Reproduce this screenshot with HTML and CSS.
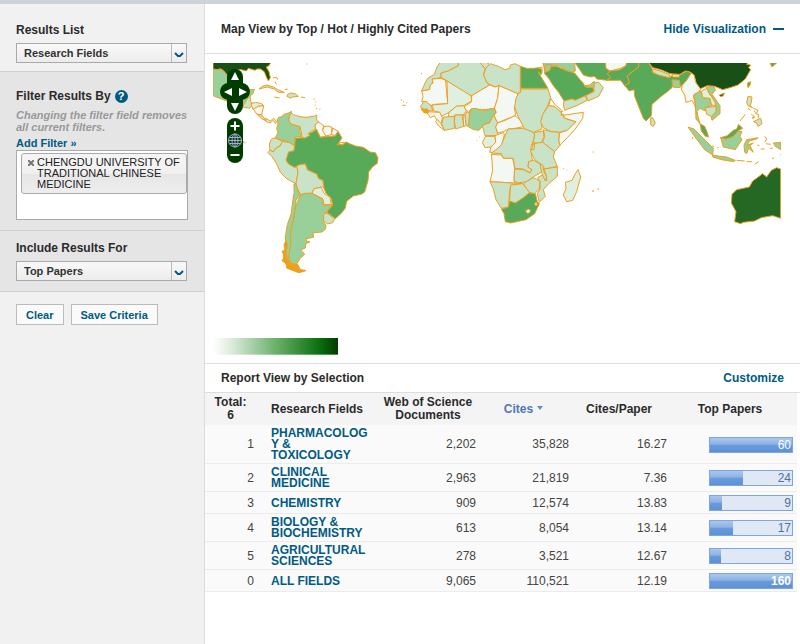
FILE: index.html
```
<!DOCTYPE html>
<html lang="en">
<head>
  <meta charset="utf-8">
  <title>Top Papers by Research Field</title>
  <link rel="stylesheet" href="styles.css">
</head>

<body>
  <div class="page">
    <form class="sidebar">
      <div class="panel results-list">
        <label class="title" for="results">Results List</label>
        <div class="select-box">
          <select id="results"><option>Research Fields</option><option>Authors</option><option>Institutions</option></select>
          <svg viewBox="0 0 10 6"><path d="M1 1 L4 4 H6 L9 1"/></svg>
        </div>
      </div>

      <div class="panel filter">
        <div class="title">Filter Results By <button type="button" class="help" aria-label="Help">?</button></div>
        <p class="note">Changing the filter field removes all current filters.</p>
        <a class="add-filter" href="#">Add Filter »</a>
        <div class="filter-box">
          <div class="chip">
            <button type="button" class="remove" aria-label="Remove filter"><svg viewBox="0 0 6 6"><path d="M0 0 L6 6 M6 0 L0 6"/></svg></button>
            <span>CHENGDU UNIVERSITY OF TRADITIONAL CHINESE MEDICINE</span>
          </div>
        </div>
      </div>

      <div class="panel include">
        <label class="title" for="include">Include Results For</label>
        <div class="select-box">
          <select id="include"><option>Top Papers</option><option>Hot Papers</option><option>Highly Cited Papers</option></select>
          <svg viewBox="0 0 10 6"><path d="M1 1 L4 4 H6 L9 1"/></svg>
        </div>
      </div>

      <div class="actions">
        <button type="reset">Clear</button>
        <button type="button">Save Criteria</button>
      </div>
    </form>

    <main>
      <div class="bar-head map-head">
        <h2>Map View by Top / Hot / Highly Cited Papers</h2>
        <a href="#">Hide Visualization<i class="minus"></i></a>
      </div>

      <div class="map">
        <svg class="world" viewBox="0 0 1704 876">
          <defs>
            <linearGradient id="scale">
              <stop offset="0" stop-color="#fff"/>
              <stop offset=".15" stop-color="#dcebdc"/>
              <stop offset=".5" stop-color="#6cb06c"/>
              <stop offset=".85" stop-color="#0b700f"/>
              <stop offset="1" stop-color="#003c00"/>
            </linearGradient>
          </defs>

          <!-- North and Central America -->
          <g class="land" transform="translate(-24 -24)">
            <path class="g6" d="M24 22 H198 L192 32 L184 36 L192 50 L196 68 L190 78 L184 66 L178 50 L166 42 L156 42 L150 46 L130 40 L124 48 L108 44 L90 46 L76 58 L74 72 L66 60 L56 48 L48 42 L34 44 L24 42Z"/>
            <path class="g3" d="M24 42 L34 44 L48 42 L56 48 L66 60 L74 72 L72 100 L80 130 L100 138 L118 122 L128 104 L148 103 L144 116 L136 122 L132 130 L126 132 L116 150 L96 145 L70 140 L24 122Z"/>
            <path class="g2" d="M116 150 L126 132 L136 124 L136 140 L144 146 L134 160 L112 156Z"/>
            <path class="g1" d="M138 146 L152 142 L170 146 L176 152 L160 154 L144 164Z"/>
            <path class="g0" d="M145 162 L160 154 L176 152 L170 180 L156 178Z"/>
            <path class="g2" d="M156 178 L170 180 L180 192 L184 198 L168 190Z"/>
            <path class="g1" d="M182 190 L196 198 L206 190 L214 198 L212 206 L204 196 L196 204 L184 200Z"/>
            <path class="g2" d="M162 102 L172 94 L186 90 L205 96 L218 104 L238 112 L220 112 L208 102 L186 96Z"/>
            <path class="g2" d="M248 118 L256 114 L270 116 L280 124 L262 126 L258 130 L246 124Z"/>
            <path d="M208 126 l16 3 M288 126 l12 2 M304 27 h3 M204 68 h12 l2 6 M210 80 l4 8 M327 130 v4 M332 139 v3 M330 149 v3 M334 159 l2 3 M343 162 h3 M116 258 v6 M120 262 v3 M240 104 l8 -2"/>
          </g>

          <!-- South America -->
          <g class="land" transform="translate(111 141)">
            <path class="g2" d="M118 18 L124 8 L130 14 L150 20 L168 22 L196 18 L200 14 L200 30 L206 36 L196 44 L200 56 L180 66 L178 78 L166 84 L156 82 L154 66 L150 50 L122 42 L116 30Z"/>
            <path class="g3" d="M82 28 L86 22 L96 20 L100 14 L118 8 L124 4 L124 10 L118 18 L116 30 L122 42 L150 50 L150 66 L154 82 L142 80 L134 82 L136 92 L134 108 L128 104 L118 96 L98 92 L76 82 L84 68 L80 56 L84 42Z"/>
            <path class="g0" d="M206 36 L212 40 L222 48 L218 58 L230 78 L212 82 L204 68 L196 58 L196 44Z"/>
            <path class="g0" d="M222 50 L234 48 L246 52 L244 74 L228 78 L218 62Z"/>
            <path class="g0" d="M248 54 L264 64 L256 76 L244 74Z"/>
            <path class="g2" d="M64 88 L70 84 L80 86 L98 94 L90 108 L76 116 L70 126 L60 120 L58 102Z"/>
            <path class="g2" d="M60 120 L70 126 L76 116 L90 108 L98 94 L118 98 L134 108 L132 122 L116 126 L110 150 L116 162 L134 172 L140 168 L144 186 L142 200 L138 222 L110 206 L92 188 L80 162 L66 140 L54 128Z"/>
            <path class="g4" d="M134 108 L136 84 L154 84 L166 84 L180 76 L174 70 L184 68 L200 58 L204 68 L210 82 L230 80 L256 78 L264 64 L276 84 L264 102 L276 104 L290 96 L296 100 L316 108 L340 112 L360 126 L376 128 L384 144 L382 160 L368 170 L356 186 L354 212 L344 246 L336 252 L310 258 L290 274 L286 294 L274 310 L256 326 L230 306 L248 286 L244 266 L228 250 L220 230 L218 210 L206 206 L200 192 L174 180 L166 162 L150 164 L134 172 L116 162 L108 150 L116 126 L132 122Z"/>
            <path class="g2" d="M140 168 L150 164 L166 162 L172 180 L200 192 L206 206 L218 212 L222 230 L210 232 L192 236 L186 250 L168 250 L152 254 L142 236 L138 222 L144 186Z"/>
            <path class="g1" d="M192 236 L214 232 L222 250 L240 262 L244 284 L222 284 L218 266 L186 250Z"/>
            <path class="g3" d="M152 254 L168 250 L186 250 L218 268 L220 286 L246 284 L230 306 L222 318 L220 332 L228 348 L226 358 L216 366 L190 368 L190 382 L168 386 L170 394 L180 396 L168 400 L166 414 L152 420 L164 432 L150 446 L140 462 L120 460 L114 436 L120 400 L120 370 L130 330 L136 290Z"/>
            <path class="g3" d="M132 222 L138 222 L142 236 L150 256 L138 270 L136 290 L130 330 L122 362 L122 400 L116 440 L122 462 L108 464 L100 440 L108 400 L106 380 L112 344 L124 310 L126 290 L132 250Z"/>
            <path class="g2" d="M222 308 L234 312 L254 326 L248 338 L232 342 L220 330Z"/>
            <path class="coast" d="M108 392 L112 404 L108 424 L112 448 L124 462 L144 464 L150 478 L168 482 L146 488 L110 474 L110 462 L96 452 L104 440 L96 424 L106 420 L102 404Z"/>
            <path d="M262 104 L270 98 L286 98 L278 106 L268 102 L260 106"/>
          </g>

          <!-- West and Central Africa -->
          <g class="land" transform="translate(546 -24)">
            <path class="g2" d="M136 22 H190 L190 32 L160 48 L138 54 L138 68 L112 72 L112 84 L106 90 L104 104 L80 108 L90 84 L98 70 L118 58 L126 36Z"/>
            <path class="g2" d="M190 22 H254 L270 40 L266 60 L276 84 L284 90 L230 122 L214 116 L156 78 L138 66 L138 54 L160 48 L190 32Z"/>
            <path class="g2" d="M254 22 H274 L284 28 L272 42Z"/>
            <path class="g2" d="M272 40 L286 26 L310 34 L330 44 L344 40 L346 30 L360 26 L376 34 L376 112 L368 116 L312 92 L300 96 L276 84 L266 60Z"/>
            <path class="g0" d="M138 70 L156 78 L152 78 L158 146 L116 148 L108 152 L92 140 L80 140 L84 124 L80 108 L104 104 L106 90 L114 84 L112 72 L138 70Z"/>
            <path class="g1" d="M156 78 L228 122 L230 138 L206 152 L184 154 L162 172 L140 184 L134 172 L116 168 L112 150 L158 146Z"/>
            <path class="g0" d="M230 122 L284 90 L300 96 L312 92 L308 130 L298 160 L270 164 L228 162 L220 172 L206 156 L230 140Z"/>
            <path class="g0" d="M312 92 L368 116 L366 140 L358 158 L362 182 L330 194 L308 204 L296 180 L304 172 L298 160 L308 130Z"/>
            <path class="g3" d="M228 162 L244 160 L260 168 L298 160 L302 172 L290 190 L284 204 L270 206 L252 226 L236 224 L218 214 L222 176Z"/>
            <path class="g2" d="M302 172 L296 182 L308 204 L302 216 L310 242 L270 242 L262 212 L274 206 L284 204 L290 190Z"/>
            <path class="g0" d="M308 204 L330 196 L360 182 L376 196 L390 214 L360 220 L340 222 L326 230 L308 234 L302 216Z"/>
            <path class="g1" d="M162 172 L184 154 L206 152 L214 168 L204 180 L180 180 L178 190 L160 184Z"/>
            <path class="g2" d="M146 186 L178 184 L178 220 L148 226 L140 206Z"/>
            <path class="g2" d="M180 180 L202 180 L206 214 L182 222 L178 200Z"/>
            <path class="g1" d="M204 180 L210 180 L214 212 L206 214Z"/>
            <path class="g2" d="M210 180 L216 170 L224 176 L220 212 L214 212Z"/>
            <path class="g2" d="M86 140 L94 140 L108 152 L114 168 L90 166 L76 156Z"/>
            <path class="g0" d="M94 170 L134 172 L142 188 L138 206 L126 196 L118 182 L106 188Z"/>
            <path class="g0" d="M122 200 L128 194 L138 206 L148 226 L132 214Z"/>
            <path class="coast" d="M78 162 L98 162 L100 174 L88 174Z"/>
            <path class="g1" d="M272 244 L300 244 L302 262 L288 276 L270 278 L262 262Z"/>
            <path class="g0" d="M300 242 L326 232 L328 240 L318 278 L300 292 L284 292 L288 276 L302 262Z"/>
            <path d="M78 56 h3 M17 135 h4 M24 140 h3 M34 143 h3 M22 151 h10 M252 246 h2 M245 256 h2"/>
          </g>

          <!-- East and Southern Africa, Middle East -->
          <g class="land" transform="translate(801 -24)">
            <path class="g4" d="M122 34 L140 40 L160 40 L176 38 L186 44 L184 60 L174 50 L204 100 H122Z"/>
            <path class="g2" d="M122 102 H204 L212 128 L204 150 L188 180 L184 200 L186 222 L160 232 L134 222 L114 184 L104 156 L108 130 L116 114 L122 112Z"/>
            <path class="g0" d="M212 130 L226 150 L248 168 L244 172 L220 154 L206 152Z"/>
            <path class="g2" d="M206 152 L222 154 L242 170 L254 190 L288 200 L262 226 L238 232 L214 230 L190 218 L182 200 L188 178Z"/>
            <path class="g0" d="M248 178 L254 180 L310 172 L308 190 L286 222 L262 248 L240 270 L236 258 L238 234 L262 226 L288 200 L256 190Z"/>
            <path class="g2" d="M190 224 L214 230 L238 232 L236 258 L240 272 L224 290 L188 262 L194 244Z"/>
            <path class="g2" d="M164 232 L190 228 L192 246 L184 264 L160 264Z"/>
            <path class="g2" d="M84 222 L130 220 L160 232 L164 240 L158 264 L152 280 L156 310 L160 318 L146 320 L144 336 L156 344 L150 354 L130 342 L104 340 L100 310 L70 310 L64 296 L34 294 L48 284 L64 270 L76 240Z"/>
            <path class="g2" d="M160 266 L188 262 L224 290 L220 306 L232 334 L196 342 L180 326 L164 314 L152 290Z"/>
            <path class="g0" d="M34 298 L64 300 L70 310 L98 310 L104 340 L102 376 L106 384 L66 382 L30 380 L38 346 L36 318Z"/>
            <path class="g2" d="M104 342 L130 344 L150 354 L156 344 L144 336 L146 320 L160 316 L180 326 L186 350 L160 366 L140 380 L112 384 L102 376Z"/>
            <path class="g2" d="M192 342 L232 336 L232 364 L206 386 L190 404 L196 424 L178 442 L172 416 L180 402 L180 378 L172 368 L188 360 L200 378 L200 366Z"/>
            <path class="g2" d="M180 326 L188 330 L192 350 L200 366 L196 378 L186 356Z"/>
            <path class="g2" d="M130 386 L142 378 L160 368 L180 378 L178 402 L164 416 L146 412Z"/>
            <path class="g2" d="M30 380 L66 382 L126 386 L92 392 L88 420 L86 456 L64 460 L48 434 L40 402Z"/>
            <path class="g2" d="M92 390 L128 386 L148 412 L130 430 L106 444 L88 440Z"/>
            <path class="g4" d="M64 462 L86 456 L88 438 L106 444 L130 428 L148 414 L166 416 L172 440 L178 446 L164 476 L138 494 L92 504 L76 500 L72 476Z"/>
            <path class="sea" d="M136 468 L146 462 L152 468 L144 476Z M164 444 L170 442 L172 450 L166 452Z"/>
            <path class="g1" d="M294 344 L302 366 L290 410 L278 436 L260 440 L250 420 L258 400 L256 382 L276 376 L286 356Z"/>
            <path class="g3" d="M188 22 H284 L286 48 L276 52 L262 48 L240 34 L218 30 L210 46 L196 52Z"/>
            <path class="g3" d="M196 30 L214 28 L210 46 L194 52Z"/>
            <path class="g4" d="M192 54 L210 46 L214 34 L230 34 L262 48 L284 54 L300 74 L308 82 L316 96 L338 96 L342 108 L318 122 L286 136 L276 132 L252 138 L236 112 L220 92 L206 70Z"/>
            <path class="g2" d="M252 138 L276 132 L286 136 L316 122 L322 136 L290 152 L254 166 L250 150Z"/>
            <path class="g2" d="M342 84 L356 82 L370 98 L356 124 L324 138 L318 122 L342 110Z"/>
            <path class="g3" d="M314 92 L330 90 L342 78 L344 90 L338 98 L318 96Z"/>
            <path d="M172 40 L186 36 L186 54 M154 268 h10 l-2 16 h-8 M244 168 v14 M338 291 h2 M251 340 v3 M260 345 h2 M337 408 h4 M353 402 h3"/>
          </g>

          <!-- Asia and Oceania -->
          <g class="land" transform="translate(1131 -24)">
            <path class="g4" d="M-46 22 H46 L60 48 L52 56 L62 68 L50 76 L20 72 L14 64 L0 66 L-20 60 L-32 42Z"/>
            <path class="g0" d="M46 22 H110 L108 32 L92 40 L60 48 L48 40Z"/>
            <path class="g4" d="M110 22 H146 V36 L112 62 L118 84 L104 92 L92 76 L50 76 L62 68 L52 56 L60 48 L90 44 L108 32Z"/>
            <path class="g4" d="M146 22 H176 L186 40 L190 54 L238 68 L246 62 L270 60 L290 48 L304 54 L290 76 L274 94 L262 98 L248 82 L246 98 L230 112 L216 122 L186 148 L184 182 L168 198 L160 190 L148 160 L134 124 L132 104 L118 108 L104 92 L118 84 L112 62 L146 36Z"/>
            <path class="g2" d="M188 42 L212 48 L240 60 L238 68 L206 60 L188 52Z"/>
            <path class="g3" d="M246 74 L268 76 L272 96 L262 98 L248 96Z"/>
            <path class="g1" d="M246 58 H268 V66 H248Z"/>
            <path class="g2" d="M182 188 L188 188 L196 204 L190 214 L182 210Z"/>
            <path class="g6" d="M176 22 H474 L470 28 L482 30 L476 38 L482 44 L466 72 L444 90 L420 98 L398 104 L374 94 L352 92 L330 102 L318 84 L312 60 L298 50 L286 48 L270 58 L240 56 L212 44 L188 38Z"/>
            <path class="g6" d="M388 120 L404 114 L398 124 L390 124Z"/>
            <path class="g0" d="M304 54 L312 60 L318 84 L332 102 L326 112 L310 122 L316 148 L322 178 L314 150 L306 136 L296 140 L288 142 L284 120 L274 104 L276 92 L290 76Z"/>
            <path class="g3" d="M312 118 L332 108 L338 128 L360 130 L366 152 L346 158 L346 168 L330 160 L320 170 L330 206 L318 192 L316 150Z"/>
            <path class="g1" d="M334 108 L350 100 L360 120 L378 140 L374 154 L364 148 L360 130 L338 128Z"/>
            <path class="g3" d="M348 96 L372 94 L376 106 L366 118 L390 152 L390 176 L366 196 L364 184 L380 168 L376 144 L360 116Z"/>
            <path class="g2" d="M346 158 L378 154 L378 170 L364 184 L350 178Z"/>
            <path class="g4" d="M330 206 L344 214 L350 228 L356 246 L346 244 L334 228Z"/>
            <path class="g3" d="M294 216 L312 222 L346 256 L370 280 L368 300 L344 284 L318 250Z"/>
            <path class="g3" d="M368 300 L390 304 L410 306 L436 316 L432 320 L394 314 L368 306Z"/>
            <path class="g3" d="M392 248 L408 252 L430 244 L444 228 L456 230 L450 244 L456 254 L436 284 L400 276Z"/>
            <path class="g4" d="M392 248 L412 242 L430 226 L440 222 L446 208 L458 220 L444 228 L430 244 L408 252Z"/>
            <path class="g3" d="M470 254 L504 248 L500 252 L478 258 L472 270 L490 264 L480 272 L490 292 L476 280 L470 296 L464 292 L462 270Z"/>
            <path class="g2" d="M474 124 L486 126 L484 142 L480 154 L488 158 L474 152 L470 142Z"/>
            <path class="g2" d="M490 200 L512 190 L516 206 L504 214 L500 204Z"/>
            <path class="g3" d="M550 264 L572 262 V284 L556 274Z"/>
            <path class="g4" d="M472 84 L482 80 L480 90 L474 98Z"/>
            <path class="g4" d="M540 24 L562 22 L546 36Z"/>
            <path d="M474 160 l8 6 M490 160 l14 6 l-4 8 l-8 -6 M484 178 l8 6 l-4 8 M496 176 l10 2 l-2 12 M486 188 l10 -2 M450 198 L466 178 M524 244 l6 8 l-6 10 M502 270 l6 2 M512 282 h12 M528 266 l14 2 M540 280 h8 M572 298 v2 M440 316 l24 2 M470 320 h16 M494 328 l12 -8 M546 312 l6 -4 M308 246 v6 M366 272 l6 4 M382 278 h4 M8 291 h2 M7 408 h4 M23 402 h3"/>
            <path class="g5" d="M572 342 V490 L548 482 L514 488 L494 498 L460 502 L452 506 L434 500 L438 470 L424 444 L426 418 L440 404 L478 396 L488 378 L502 368 L518 356 L530 366 L544 346 L560 338Z"/>
          </g>

          <rect y="825" width="375" height="50" fill="url(#scale)"/>
        </svg>

        <div class="pan">
          <button type="button" class="up" aria-label="Pan up"><svg viewBox="0 0 8 8"><path d="M4 0 L8 8 H0Z"/></svg></button>
          <button type="button" class="left" aria-label="Pan left"><svg viewBox="0 0 8 8"><path d="M0 4 L8 0 V8Z"/></svg></button>
          <button type="button" class="right" aria-label="Pan right"><svg viewBox="0 0 8 8"><path d="M8 4 L0 0 V8Z"/></svg></button>
          <button type="button" class="down" aria-label="Pan down"><svg viewBox="0 0 8 8"><path d="M4 8 L8 0 H0Z"/></svg></button>
        </div>
        <div class="zoom">
          <button type="button" aria-label="Zoom in"><svg viewBox="0 0 15 15"><path d="M3 8 H12 M7.5 3.5 V12.5"/></svg></button>
          <button type="button" class="globe" aria-label="Whole world"><svg viewBox="0 0 15 15"><circle cx="7.5" cy="7.5" r="6.5"/><ellipse cx="7.5" cy="7.5" rx="3" ry="6.5"/><path d="M7.5 1 V14 M1 7.5 H14 M2 4.5 H13 M2 10.5 H13"/></svg></button>
          <button type="button" aria-label="Zoom out"><svg viewBox="0 0 15 15"><path d="M3 7 H12"/></svg></button>
        </div>
      </div>

      <div class="bar-head report-head">
        <h2>Report View by Selection</h2>
        <a href="#">Customize</a>
      </div>

      <table>
        <colgroup>
          <col class="c-total"><col class="c-field"><col class="c-docs"><col class="c-cites"><col class="c-avg"><col>
        </colgroup>
        <thead>
          <tr>
            <th class="total">Total:<br>6</th>
            <th>Research Fields</th>
            <th>Web of Science Documents</th>
            <th class="shift"><a class="sort" href="#">Cites<i></i></a></th>
            <th class="shift">Cites/Paper</th>
            <th class="shift-less">Top Papers</th>
          </tr>
        </thead>
        <tbody>
          <tr>
            <td>1</td><td class="field"><a href="#">PHARMACOLOGY &amp; TOXICOLOGY</a></td><td>2,202</td><td>35,828</td><td>16.27</td>
            <td class="papers"><div class="meter full"><i style="width:100%"></i><span>60</span></div></td>
          </tr>
          <tr>
            <td>2</td><td class="field"><a href="#">CLINICAL MEDICINE</a></td><td>2,963</td><td>21,819</td><td>7.36</td>
            <td class="papers"><div class="meter"><i style="width:40%"></i><span>24</span></div></td>
          </tr>
          <tr>
            <td>3</td><td class="field"><a href="#">CHEMISTRY</a></td><td>909</td><td>12,574</td><td>13.83</td>
            <td class="papers"><div class="meter"><i style="width:15%"></i><span>9</span></div></td>
          </tr>
          <tr>
            <td>4</td><td class="field"><a href="#">BIOLOGY &amp; BIOCHEMISTRY</a></td><td>613</td><td>8,054</td><td>13.14</td>
            <td class="papers"><div class="meter"><i style="width:28%"></i><span>17</span></div></td>
          </tr>
          <tr>
            <td>5</td><td class="field"><a href="#">AGRICULTURAL SCIENCES</a></td><td>278</td><td>3,521</td><td>12.67</td>
            <td class="papers"><div class="meter"><i style="width:14%"></i><span>8</span></div></td>
          </tr>
          <tr>
            <td>0</td><td class="field"><a href="#">ALL FIELDS</a></td><td>9,065</td><td>110,521</td><td>12.19</td>
            <td class="papers"><div class="meter full"><i style="width:100%"></i><span><b>160</b></span></div></td>
          </tr>
        </tbody>
      </table>
    </main>
  </div>
</body>
</html>
```
FILE: styles.css
```
* {
  box-sizing: border-box;
}
body {
  margin: 0;
  font-family: "Liberation Sans", Arial, sans-serif;
  font-size: 12px;
  line-height: 16px;
  color: #2b2b2b;
  background: #fff;
}
a {
  color: #005a84;
  font-weight: bold;
  text-decoration: none;
}
button, select {
  font-family: inherit;
}
.page {
  display: flex;
  min-height: 100vh;
  border-top: 4px solid #ccd4da;
}

/* sidebar */
.sidebar {
  flex: 0 0 205px;
  background: #f1f1f1;
  border-right: 1px solid #dcdcdc;
}
.panel {
  padding: 0 17px 10px 16px;
  border-bottom: 1px solid #cfcfcf;
  background: #e5e5e5;
}
.title {
  display: block;
  font-weight: bold;
  padding-bottom: 5px;
}
.results-list {
  background: #f1f1f1;
  padding-top: 18px;
  padding-bottom: 8px;
}
.filter {
  padding-top: 16px;
}
.filter .title {
  display: flex;
  align-items: center;
  gap: 4px;
}
.include {
  padding-top: 9px;
}
.select-box {
  position: relative;
}
.select-box::after {
  content: "";
  position: absolute;
  top: 1px;
  right: 15px;
  width: 1px;
  height: 18px;
  background: #bbb;
}
.select-box svg {
  position: absolute;
  right: 3px;
  top: 9px;
  width: 10px;
  height: 6px;
  fill: none;
  stroke: #005a84;
  stroke-width: 2;
  pointer-events: none;
}
select {
  appearance: none;
  display: block;
  width: 100%;
  height: 20px;
  padding: 0 7px;
  border: 1px solid #aaa;
  border-radius: 0;
  background: linear-gradient(#f9f9f9, #ececec);
  color: #333;
  font-size: 11px;
  font-weight: bold;
}
.help {
  width: 13px;
  height: 13px;
  padding: 0;
  border: 0;
  border-radius: 50%;
  background: #005a84;
  color: #fff;
  font-size: 11px;
  line-height: 13px;
  font-weight: bold;
}
.note {
  margin: 0 -4px 0 0;
  color: #999;
  font-size: 11px;
  line-height: 12px;
  font-weight: bold;
  font-style: italic;
}
.add-filter {
  display: block;
  padding-top: 4px;
  font-size: 11px;
  line-height: 13px;
}
.filter-box {
  height: 70px;
  margin-right: -1px;
  padding: 2px 0 0 4px;
  border: 1px solid #aaa;
  background: #fff;
}
.chip {
  display: flex;
  gap: 3px;
  padding: 3px 4px 3px 6px;
  border: 1px solid #aaa;
  border-radius: 3px;
  background: linear-gradient(#f4f4f4 20%, #f0f0f0 50%, #e6e6e6 52%, #eee);
  color: #222;
  font-size: 11px;
  line-height: 11px;
}
.chip span {
  flex: 1;
  margin-right: -4px;
}
.remove {
  display: flex;
  align-items: center;
  width: 6px;
  height: 11px;
  padding: 0;
  border: 0;
  background: none;
}
.remove svg {
  display: block;
  width: 6px;
  height: 6px;
  stroke: #777;
  stroke-width: 2;
}
.actions {
  display: flex;
  gap: 7px;
  padding: 12px 16px;
}
.actions button {
  height: 21px;
  padding: 0 9px;
  border: 1px solid #bbb;
  background: #fafafa;
  color: #005a84;
  font-size: 11px;
  font-weight: bold;
}

/* map */
main {
  flex: 1;
  min-width: 0;
}
.bar-head {
  display: flex;
  align-items: center;
  justify-content: space-between;
  height: 29px;
  padding: 0 16px;
  border-bottom: 1px solid #ddd;
}
.map-head {
  height: 50px;
}
h2 {
  margin: 0;
  font-size: 12px;
}
.minus {
  display: inline-block;
  width: 11px;
  height: 2px;
  margin-left: 7px;
  background: #005a84;
  vertical-align: 3px;
}
.map {
  position: relative;
  padding: 9px 19px 8px 8px;
  border-bottom: 1px solid #ddd;
}
.world {
  display: block;
  width: 100%;
}
.land path {
  fill: none;
  stroke: #ee9f1e;
  stroke-width: 3;
  stroke-linejoin: round;
}
.land .g0 { fill: #f4f8f4; }
.land .g1 { fill: #e0f0e0; }
.land .g2 { fill: #c8e3c8; }
.land .g3 { fill: #99d099; }
.land .g4 { fill: #58aa58; }
.land .g5 { fill: #246824; }
.land .g6 { fill: #185018; }
.land .sea { fill: #fff; }
.land .coast { fill: #ee9f1e; }

.pan, .zoom {
  position: absolute;
}
.pan {
  top: 15px;
  left: 15px;
  width: 30px;
  display: grid;
  grid-template: "up up" 14px "left right" 17px "down down" 14px / 15px 15px;
  place-items: center;
}
.pan::before, .pan::after {
  content: "";
  position: absolute;
  background: #003c00;
  border-radius: 9px;
}
.pan::before {
  inset: 0 7px;
}
.pan::after {
  inset: 14px 0;
}
.pan button, .zoom button {
  position: relative;
  z-index: 1;
  padding: 0;
  border: 0;
  background: none;
}
.pan svg {
  display: block;
  width: 8px;
  height: 8px;
  fill: #fff;
}
.up { grid-area: up; }
.left { grid-area: left; }
.right { grid-area: right; }
.down { grid-area: down; }
.zoom {
  top: 64px;
  left: 22px;
  width: 16px;
  border-radius: 8px;
  background: #003c00;
}
.zoom button {
  display: block;
}
.zoom svg {
  display: block;
  width: 16px;
  height: 15px;
  fill: none;
  stroke: #fff;
  stroke-width: 2;
}
.zoom .globe svg {
  stroke: #a3acd8;
  stroke-width: 1;
}

/* report table */
table {
  width: calc(100% - 3px);
  table-layout: fixed;
  border-collapse: collapse;
}
.c-total { width: 57px; }
.c-field { width: 110px; }
.c-docs { width: 112px; }
.c-cites { width: 93px; }
.c-avg { width: 98px; }
th {
  height: 32px;
  padding: 0;
  background: #f4f4f4;
  line-height: 13px;
}
.total {
  padding-right: 6px;
}
.shift {
  padding-right: 14px;
}
.shift-less {
  padding-right: 12px;
}
.sort {
  color: #4a7ab5;
}
.sort i {
  display: inline-block;
  margin-left: 4px;
  border: 3px solid transparent;
  border-top: 4px solid #5b8fd0;
  border-bottom: 0;
  vertical-align: 3px;
}
td {
  padding: 3px 8px 2px;
  border-bottom: 1px solid #ececec;
  background: #fafafa;
  color: #444;
  line-height: 11px;
  text-align: right;
}
.field {
  padding-left: 9px;
  padding-right: 3px;
  text-align: left;
  word-break: break-word;
}
.papers {
  padding: 3px 4px 2px;
}
.meter {
  position: relative;
  width: 84px;
  height: 16px;
  margin-left: auto;
  border: 1px solid #7ea6dc;
  background: #e0e8f5;
}
.meter i {
  display: block;
  height: 100%;
  background: linear-gradient(#a9c7ee, #8db2e4 45%, #6a9bdc 50%, #5c91d8);
}
.meter span {
  position: absolute;
  top: 2px;
  right: 1px;
  color: #4f729f;
}
.meter.full span {
  color: #fff;
}
```
